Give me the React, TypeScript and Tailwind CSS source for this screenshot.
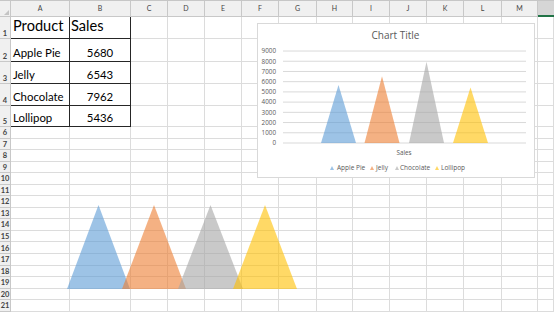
import React from 'react';

const COLS = ['A', 'B', 'C', 'D', 'E', 'F', 'G', 'H', 'I', 'J', 'K', 'L', 'M', 'N'];
const ROWS = Array.from({ length: 21 }, (_, i) => i + 1);

const DATA: { product: string; sales: number; color: string }[] = [
  { product: 'Apple Pie', sales: 5680, color: '#5B9BD5' },
  { product: 'Jelly', sales: 6543, color: '#ED7D31' },
  { product: 'Chocolate', sales: 7962, color: '#A5A5A5' },
  { product: 'Lollipop', sales: 5436, color: '#FFC000' },
];

// row heights in px: rows 1-5 are taller (bigger font), the rest default
const rowClass = (r: number) => {
  if (r === 1) return 'h-[22px]';
  if (r === 2) return 'h-[23px]';
  if (r === 3 || r === 4) return 'h-[22px]';
  if (r === 5) return 'h-[21px]';
  return 'h-[11.56px]';
};

function Cell({ r, c }: { r: number; c: number }) {
  const inTable = r <= 5 && c <= 1;
  const border = inTable ? 'border-r border-b border-[#262626]' : 'border-r border-b border-[#dcdcdc]';
  let content: React.ReactNode = null;
  if (r === 1 && c === 0) content = <span className="pl-[2px] text-[14.6px] leading-none">Product</span>;
  if (r === 1 && c === 1) content = <span className="pl-[1px] text-[14.6px] leading-none">Sales</span>;
  if (r >= 2 && r <= 5) {
    const d = DATA[r - 2];
    if (c === 0) content = <span className="pl-[2px] text-[11.4px] leading-none">{d.product}</span>;
    if (c === 1) content = <span className="w-full text-center text-[11.4px] leading-none">{d.sales}</span>;
  }
  return (
    <div className={`${border} ${rowClass(r)} flex items-end ${r === 1 ? 'pb-[4px]' : 'pb-[3px]'} overflow-visible whitespace-nowrap text-black`}>
      {content}
    </div>
  );
}

function Chart() {
  const base = 120;
  const unit = 10.22;
  const centers = [81.5, 125, 169.5, 213.5];
  const legend = [
    { mx: 75, tx: 80 },
    { mx: 115, tx: 119 },
    { mx: 140, tx: 143 },
    { mx: 180, tx: 184 },
  ];
  return (
    <div className="absolute left-[257px] top-[23px] w-[278px] h-[155px] bg-white border border-[#d9d9d9]">
      <svg width="278" height="155" className="absolute -left-px -top-px" style={{ fontFamily: '"Open Sans", "Liberation Sans", sans-serif' }}>
        <text x="138.5" y="16" textAnchor="middle" fontSize="10" fill="#595959">Chart Title</text>
        {Array.from({ length: 10 }, (_, i) => {
          const y = base - i * unit;
          return (
            <g key={i}>
              <line x1="26" x2="269" y1={y} y2={y} stroke="#d9d9d9" strokeWidth="1" />
              <text x="19" y={y + 2.3} textAnchor="end" fontSize="6.3" fill="#595959">{i * 1000}</text>
            </g>
          );
        })}
        {DATA.map((d, i) => {
          const top = base - (d.sales / 1000) * unit;
          const cx = centers[i];
          return (
            <polygon key={d.product} points={`${cx - 17.5},${base} ${cx},${top} ${cx + 17.5},${base}`} fill={d.color} fillOpacity="0.6" />
          );
        })}
        <text x="147" y="131.5" textAnchor="middle" fontSize="6.3" fill="#595959">Sales</text>
        {DATA.map((d, i) => (
          <g key={d.product}>
            <polygon points={`${legend[i].mx - 2},${147} ${legend[i].mx},${143} ${legend[i].mx + 2},${147}`} fill={d.color} fillOpacity="0.6" />
            <text x={legend[i].tx} y="147.3" fontSize="6.5" fill="#595959">{d.product}</text>
          </g>
        ))}
      </svg>
    </div>
  );
}

function Shapes() {
  // floating triangle shapes placed over the sheet
  const tris = [
    { l: 67, a: 98.5, r: 130, color: '#5B9BD5' },
    { l: 122, a: 154, r: 186, color: '#ED7D31' },
    { l: 178, a: 210.5, r: 243, color: '#A5A5A5' },
    { l: 233, a: 265, r: 297, color: '#FFC000' },
  ];
  return (
    <svg width="554" height="314" className="absolute left-0 top-0 pointer-events-none">
      {tris.map((t) => (
        <polygon key={t.color} points={`${t.l},289 ${t.a},205 ${t.r},289`} fill={t.color} fillOpacity="0.6" />
      ))}
    </svg>
  );
}

export default function App() {
  return (
    <div className="relative w-[554px] h-[314px] overflow-hidden bg-white font-['Lato','Liberation_Sans',sans-serif]">
      <div className="grid grid-cols-[11px_59px_61px_37px_37px_37px_37px_38px_36px_37px_37px_37px_38px_36px_1fr] border-t border-[#c6c6c6]">
        {/* header row */}
        <div className="relative h-[16px] bg-[#f0f0f0] border-r border-b border-[#c8c8c8]">
          <div className="absolute right-[1px] bottom-[1px] w-0 h-0 border-l-[5px] border-l-transparent border-b-[5px] border-b-[#c4c4c4]" />
        </div>
        {COLS.map((c) => (
          <div
            key={c}
            className={
              c === 'N'
                ? 'h-[16px] bg-[#d6d6d6] border-b-2 border-[#217346] text-[7px] text-[#444] flex items-center justify-center'
                : 'h-[16px] bg-[#f0f0f0] border-r border-b border-[#c8c8c8] text-[7px] text-[#444] flex items-center justify-center'
            }
          >
            {c === 'N' ? '' : c}
          </div>
        ))}
        {ROWS.map((r) => (
          <React.Fragment key={r}>
            <div className={`${rowClass(r)} bg-[#f0f0f0] border-r border-b border-[#c8c8c8] text-[7.5px] font-bold text-[#444] flex items-end justify-center pb-[1px] leading-none`}>
              {r}
            </div>
            {COLS.map((c, ci) => (
              <Cell key={c} r={r} c={ci} />
            ))}
          </React.Fragment>
        ))}
      </div>
      <Chart />
      <Shapes />
    </div>
  );
}
